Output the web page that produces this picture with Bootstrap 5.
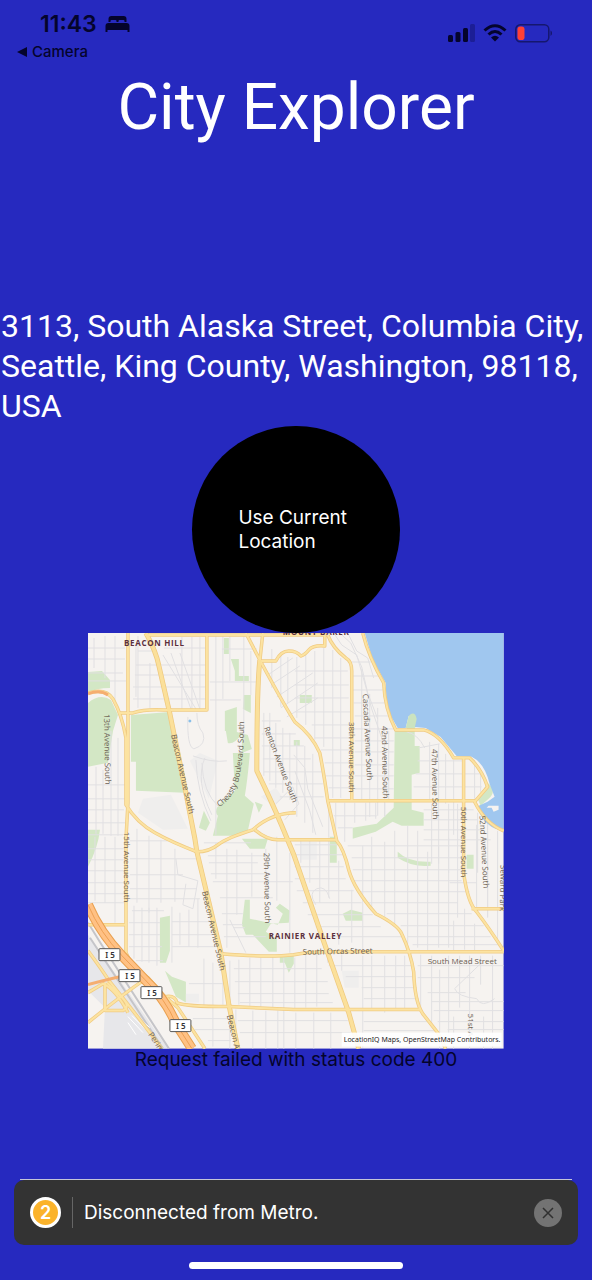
<!DOCTYPE html>
<html lang="en">
<head>
<meta charset="utf-8">
<meta name="viewport" content="width=device-width, initial-scale=1">
<title>City Explorer</title>
<link href="https://cdn.jsdelivr.net/npm/bootstrap@5.3.0/dist/css/bootstrap.min.css" rel="stylesheet">
<style>
body{background:#2629bf;font-family:Inter,"Liberation Sans",sans-serif;color:#fff}
.status{height:72px;color:#04042c}
.clock{font-size:23px;line-height:24px;font-weight:600}
.back{font-size:15px;line-height:16px;font-weight:500;color:#04042c}
.title{font-family:Roboto,"Liberation Sans",sans-serif;font-size:64px;line-height:72px;font-weight:400;margin-bottom:162px}
.address{font-family:Roboto,"Liberation Sans",sans-serif;font-size:32px;line-height:40px;padding-left:1px}
.locate{width:35%;aspect-ratio:1;background:#000;color:#fff;font-size:19px;line-height:24px;padding:0 46px}
.city-map{width:70.2%;aspect-ratio:1}
.failure{font-size:19px;line-height:22px;color:#04042c}
.notice-edge{height:1px;background:#c4c4d8;margin:0 20px}
.notice{background:#333;border-radius:10px;height:65px;margin:0 14px 17px;font-size:19px;line-height:24px}
.count{width:31px;height:31px;border:3px solid #fff;background:#fbb32b;font-size:18px;font-weight:600}
.divider{width:1px;height:31px;background:#666;margin:0 11px}
.dismiss{width:28px;height:28px;background:#737373}
.home-bar{width:36%;height:7px;margin-bottom:11px}
</style>
</head>
<body>
<div class="d-flex flex-column min-vh-100">
<header class="status d-flex justify-content-between">
  <div class="ps-3 pt-2">
    <div class="d-flex align-items-center gap-2 ps-4 pt-1"><span class="clock">11:43</span>
      <svg width="25" height="17" viewBox="0 0 24 17" fill="currentColor" aria-hidden="true"><path d="M3 6V3Q3 0 6 0H18Q21 0 21 3V6H19V5Q19 4 18 4H14Q13 4 13 5V6H11V5Q11 4 10 4H6Q5 4 5 5V6ZM3 7H21Q24 7 24 10V16H22V14H2V16H0V10Q0 7 3 7Z"/></svg>
    </div>
    <a href="#" class="back d-flex align-items-center gap-1 text-decoration-none pt-1 mt-1"><svg width="12" height="10" viewBox="0 0 12 10" fill="currentColor" aria-hidden="true"><path d="M1 5 11 0V10Z"/></svg>Camera</a>
  </div>
  <div class="d-flex align-items-start gap-2 pt-4 pe-4 me-3">
    <svg width="27" height="18" viewBox="0 0 27 18" fill="currentColor" aria-hidden="true"><rect y="11" width="5" height="7" rx="1.5"/><rect x="7.500" y="8" width="5" height="10" rx="1.500"/><rect x="15" y="4" width="5" height="14" rx="1.500"/><rect x="22" width="5" height="18" rx="1.500" opacity=".28"/></svg>
    <svg width="24" height="18" viewBox="0 0 24 18" aria-hidden="true"><g fill="none" stroke="currentColor" stroke-width="3"><path d="M1.500 6.500Q12-3 22.500 6.500M5.500 10.500Q12 4.500 18.500 10.500"/></g><path d="M8 13.500Q12 10 16 13.500L12 17.500Z" fill="currentColor"/></svg>
    <svg width="37" height="19" viewBox="0 0 37 19" aria-hidden="true"><rect x=".8" y=".8" width="33" height="17" rx="4.500" fill="none" stroke="#15176f" stroke-width="1.500"/><rect x="2.500" y="2.500" width="7" height="13.600" rx="2.800" fill="#ff4035"/><path d="M35.500 6.500Q39 9.300 35.500 12Z" fill="#15176f"/></svg>
  </div>
</header>

<main class="d-flex flex-column align-items-center">
  <h1 class="title">City Explorer</h1>
  <p class="address w-100 mb-0">3113, South Alaska Street, Columbia City, Seattle, King County, Washington, 98118, USA</p>
  <button type="button" class="locate border-0 rounded-circle text-start">Use Current Location</button>
  <svg class="city-map d-block" viewBox="0 0 416 416" role="img" aria-label="Street map of Beacon Hill and Rainier Valley">
    <defs>
      <path id="arterials" d="M40 0V170L38 206V328M0 60Q18 55 25 66Q34 82 38 105V172Q49 190 67 200T109 219Q121 219 130 212T165 197Q184 180 208 180M32 80H45Q57 76 76 77H119V2M57 2H237M158 0 172 27Q194 68 207 89Q224 102 232 120Q236 140 240 168L249 208Q256 216 261 237Q266 256 288 281Q310 292 314 301Q323 320 326 339Q327 369 335 381L350 400 358 416M175 0 172 28H188Q193 18 201 18T213 23Q217 22 221 17T237 13V0M240 2Q245 15 258 25Q264 28 264 38V168M275 0Q281 24 296 50Q297 76 308 97H336Q352 101 366 125H382Q394 136 400 154L387 169Q398 191 416 198M240 168H387M376 125V240Q380 270 389 279Q402 296 416 318M384 276H416M167 197Q179 207 190 207H249M133 321Q180 325 206 322Q220 319 240 319H416M38 320Q44 335 60 345L77 364Q87 362 89 370Q96 374 141 374L206 377H333M77 364 90 375 117 416M0 292H38M0 318Q14 337 21 348Q50 384 74 416M0 360 15 351Q28 357 40 380M0 390Q33 363 58 346M17 350V378H35Q43 374 34 365L19 350"/>
      <path id="boulevards" d="M58 0Q68 18 71 33L82 81 95 145 107 206 109 219 133 320 141 372 150 416M172 27Q169 55 169 138Q184 169 194 193L206 222 236 309 261 380 271 416"/>
      <path id="interstate" d="M0 272Q12 300 34 323L57 347Q78 367 88 391L104 416"/>
    </defs>
    <rect width="416" height="416" fill="#f6f3f0"/>
    <g fill="#d3e7c5">
      <path d="M0 39 14 38 22 47V55Q8 55 0 60ZM0 70Q12 60 23 67L30 82 25 98 20 130 0 134ZM43 82 82 79 97 160 48 158V129H43ZM136 5H141V21H136ZM143 26H151V43H161V48H147V38ZM156 62H163V80L155 76ZM137 78 149 74V99L160 102 164 116 154 120V101Q146 112 140 110L138 98H137ZM145 120H162Q160 145 157 163L166 171 160 198 151 203H125L130 183Q125 178 133 170L147 158ZM0 197H12Q10 215 0 234ZM154 206H180L177 216H162ZM72 285 82 283V318L78 330H72ZM77 338 84 344 98 349V370L88 364 83 352ZM157 267H162V286L190 292 195 281 188 275 192 271 202 278 201 290 183 291 178 299 189 306V319H181L165 302H158L154 292ZM307 97H327V113H332V140L324 142V177L336 180V193H314L305 189 288 199 265 206V195L289 191 306 175ZM319 97Q322 81 327 80T327 97ZM212 62H224V70H212ZM206 107H212V113H206ZM242 204H249V230H242ZM310 219Q321 230 343 229V233Q325 235 310 225ZM379 222H386V236H379ZM255 281 263 277 275 280V288H258ZM19 375 28 370 33 377 23 381ZM116 178 122 190 118 198 111 195ZM167 169 175 172 171 180ZM192 323 206 321V331L201 340 197 330H192ZM400 150Q410 158 401 166L393 173 390 166Z"/>
    </g>
    <path d="M0 302 80 416H15L17 375 0 358Z" fill="#e7e7ea"/>
    <g fill="#efeeed"><path d="M98 361H111V370H98ZM55 166 83 162 100 196 75 197 50 180ZM213 209H229V227H213ZM254 338H271V355H257ZM112 120 130 128 121 166 102 128ZM173 164 188 155 195 165 186 174Z"/></g>
    <g fill="none" stroke="#e1e0e2" stroke-width="1">
      <path d="M6 5V35M17 3V45M27 3V70M50 3V75M62 30V75M76 15H119M50 18H66M48 32H118M47 42H118M45 54H118M45 66H118M94 4V76M104 4V76M112 4V76M128 3V202M135 3V66M134 16H169M142 3V48M122 49H168M122 67H153M156 2V110M163 18V62M0 15H37M0 26H37M0 40H35M0 48H38M48 12V64M75 22 108 76M83 20 103 76M92 20 112 76M71 41 83 76"/>
      <path d="M8 134V201M15 137V201M23 98V203M30 105V203M0 152H38M0 166H38M0 177H36M0 190H38M0 202H35M0 216H38M0 227H38M0 238H38M0 250H38M0 261H37M0 270H37M7 204V268M17 204V270M27 204V290M49 196V270M61 203V280M73 207V270M87 216V269M42 208H80M42 226H109M42 242H95M42 256H109M42 266H112M44 278H76M46 273V326M54 275V329M61 275V330M69 275V333M84 274V330M92 280V312M101 277V314M110 266V315M41 290H72M41 302H72M41 314H74M48 328H75M84 289H125M84 302H128M84 314H129"/>
      <path d="M116 210H163M120 223H181M121 230H170M123 241H182M125 249H205M132 265H185M134 281H155M135 292H155M136 304H178M128 210V246M139 216V315M149 217V282M164 220V264M178 216V256M189 204V268M202 220V320M100 84Q99 114 106 116Q119 112 115 100Q109 93 109 80M105 123Q124 130 139 128M117 125Q107 148 124 182M108 127Q109 159 123 188M131 174Q115 160 114 130M88 226 90 242 110 248 105 276 95 272 98 251M142 287 158 320M146 295H157"/>
      <path d="M184 16V55M193 20V74M200 24V70M209 24V85M218 21V92M227 18V107M236 15V114M245 17V165M253 25V165M183 52 212 33M180 42 205 25M189 64 225 40M193 75 230 50M199 84 230 65M207 38H260M207 52H261M207 65H261M207 79H263M224 92H263M227 105H263M233 117H263M237 130H263M238 143H263M241 155H263M176 80V143M182 80V148M188 90V155M195 95V160M202 100V167M209 109V184M217 113V190M225 121V200M174 88H193M174 101H208M174 113H216M175 126H223M176 139H234M181 151H235M192 164H236M188 171 205 154 211 171 197 187M206 122 217 135 220 156 235 194M207 138 222 178 228 202"/>
      <path d="M246 0 254 12 269 22 277 50 284 76 295 108M252 0 263 10 274 34 280 60 290 86M260 0 269 18 280 25 286 45M264 29H283M265 43H291M265 57H295M266 70H297M267 83H301M267 96H308M267 108H306M267 119H306M267 132H306M267 143H306M267 156H306M274 36V168M282 61V184M290 75V183M297 94V184M301 98V168M241 175V205M248 170V205M257 170V209M267 170V190M278 170V188M288 170V186M297 170V184M246 183H289M250 195H265M319 99Q330 101 337 115M331 115 352 111M342 109V168M351 111V231M358 121V171M366 127V202M387 127V166M393 140V159M330 128H375M328 141H395M326 154H394M336 177H386M336 187H390M336 197H396M336 207H403M344 171V231M361 171V240M370 171V285M390 180V240M400 190V285M410 198V280"/>
      <path d="M207 212H250M207 222H257M207 234H256M207 246H258M209 258H266M215 270H274M220 282H285M228 294H293M235 304H315M213 207V230M222 207V250M232 207V270M241 207V265M251 228V312M264 257V310M275 213V317M284 204V275M297 209V287M307 198V292M320 193V311M330 198V315M340 219V318M351 214V315M361 205V315M389 192V275M400 198V284M410 200V310M260 213H378M264 225H375M265 237H375M266 248H374M270 259H382M280 270H370M299 281H384M313 293H396M320 304H403M325 312H412M362 250H389M366 288V318M377 276V317M387 291V318M228 272Q220 260 229 256T242 266"/>
      <path d="M116 326V374M125 330V414M135 332V372M142 328V416M151 327V372M162 325V375M173 325V375M185 324V375M196 325V416M207 325V376M218 322V375M229 322V374M240 322V330M254 322V338M275 323V415M284 323V376M297 323V380M308 323V377M317 323V376M333 322V378M344 323V393M352 337V416M361 323V405M372 323V375M382 323V416M393 323V352M405 323V416M101 351H137M146 336H234M147 349H240M150 361H241M152 370H245M241 333H325M258 344H325M274 355H329M276 366H331M276 389H340M276 398H347M265 405H408M105 386H139M107 397H142M120 408H143M150 388H260M152 400H263M330 333H416M330 345H387M340 360H378M344 369H416M346 378H416M350 389H416M360 397H416M394 330 367 356Q370 364 389 366 394 376 407 366M148 377V416M165 378V416M178 378V416M190 378V416M208 380V416M226 380V416M243 380V416M366 384V416M396 384V416"/>
    </g>
    <path d="M277 0H416V196Q406 199 395 186L389 174 400 169 407 164 402 151Q397 130 384 124L369 123 353 104 338 95 327 94V83L321 83 318 95H310L299 76 298 50 285 27Z" fill="#a0c7ef"/>
    <path d="M401 173H411V177L406 179 404 175H399Z" fill="#f6f3f0"/><circle cx="102" cy="88" r="1.500" fill="#89bfe8"/>
    <path d="M321 83Q327 77 329 86L327 95H318Z" fill="#cbe3bf"/>
    <g fill="none" stroke="#c5c5c9" stroke-width="2"><path d="M0 290 13 311 81 416M2 305 75 416"/></g>
    <path d="M40 384 55 400M44 383 59 398M40 390 48 402M46 382 62 395" stroke="#fff" stroke-width="1"/>
    <use href="#arterials" fill="none" stroke="#f0cb83" stroke-width="3.500" stroke-linejoin="round"/>
    <use href="#boulevards" fill="none" stroke="#efc97f" stroke-width="5" stroke-linejoin="round"/>
    <use href="#arterials" fill="none" stroke="#fce3a1" stroke-width="2" stroke-linejoin="round"/>
    <use href="#boulevards" fill="none" stroke="#fbe09a" stroke-width="3.500" stroke-linejoin="round"/>
    <use href="#interstate" fill="none" stroke="#e9a04f" stroke-width="10"/>
    <use href="#interstate" fill="none" stroke="#ffc184" stroke-width="8"/>
    <use href="#interstate" fill="none" stroke="#eda054" stroke-width="1"/>
    <path d="M0 352Q25 345 42 342M0 61Q12 56 20 62" fill="none" stroke="#f5ae70" stroke-width="3"/>
    <g font-family="Open Sans, Noto Sans, sans-serif" font-size="8" fill="#6b5e52">
      <text transform="translate(16 81) rotate(89)">13th Avenue South</text>
      <text transform="translate(36 199) rotate(90)">15th Avenue South</text>
      <text transform="translate(83 102) rotate(77)">Beacon Avenue South</text>
      <text transform="translate(114 259) rotate(77)">Beacon Avenue South</text>
      <text transform="translate(139 383) rotate(77)">Beacon A</text>
      <text transform="translate(176 95) rotate(69)">Renton Avenue South</text>
      <text transform="translate(176 220) rotate(89)">29th Avenue South</text>
      <text transform="translate(261 89) rotate(90)">38th Avenue South</text>
      <text transform="translate(275 61) rotate(87)">Cascadia Avenue South</text>
      <text transform="translate(294 93) rotate(89)">42nd Avenue South</text>
      <text transform="translate(344 116) rotate(89)">47th Avenue South</text>
      <text transform="translate(373 174) rotate(90)">50th Avenue South</text>
      <text transform="translate(392 183) rotate(87)">52nd Avenue South</text>
      <text transform="translate(380 381) rotate(90)">51st A</text>
      <text transform="translate(413 232) rotate(91)">Seward Park</text>
      <text transform="translate(60 402) rotate(56)">Perim</text>
      <text transform="translate(215 322) rotate(-1)">South Orcas Street</text>
      <text x="340" y="331">South Mead Street</text>
      <path id="cheasty" d="M131 174Q143 168 150 150Q157 127 156 80" fill="none"/>
      <text><textPath href="#cheasty">Cheasty Boulevard South</textPath></text>
    </g>
    <g font-family="Open Sans, Noto Sans, sans-serif" font-size="8" font-weight="700" letter-spacing=".7" fill="#5c303d">
      <text x="36" y="13">BEACON HILL</text><text x="181" y="306">RAINIER VALLEY</text><text x="195" y="2">MOUNT BAKER</text>
    </g>
    <g fill="#fff" stroke="#555" stroke-width="1"><rect x="11" y="316" width="21" height="12" rx="1"/><rect x="31" y="337" width="21" height="12" rx="1"/><rect x="53" y="354" width="21" height="12" rx="1"/><rect x="82" y="387" width="21" height="12" rx="1"/></g>
    <g font-family="Noto Sans, sans-serif" font-size="8" font-weight="600" text-anchor="middle" fill="#333"><text x="22" y="325">I 5</text><text x="42" y="346">I 5</text><text x="64" y="363">I 5</text><text x="93" y="396">I 5</text></g>
    <rect x="254" y="400" width="160" height="14" fill="#fff" opacity=".9"/>
    <text x="256" y="409" font-family="Noto Sans, sans-serif" font-size="7" fill="#222">LocationIQ Maps, OpenStreetMap Contributors.</text>
  </svg>
  <p class="failure mb-0">Request failed with status code 400</p>
</main>

<footer class="mt-auto">
  <div class="notice-edge"></div>
  <div class="notice d-flex align-items-center px-3" role="status">
    <span class="count rounded-circle d-flex align-items-center justify-content-center">2</span>
    <span class="divider"></span>
    <span class="flex-grow-1">Disconnected from Metro.</span>
    <button type="button" class="dismiss border-0 rounded-circle p-0 d-flex align-items-center justify-content-center" aria-label="Dismiss"><svg width="12" height="12" viewBox="0 0 12 12" stroke="#303030" stroke-width="1.500" aria-hidden="true"><path d="M1 1 11 11M11 1 1 11"/></svg></button>
  </div>
  <div class="home-bar bg-white rounded-pill mx-auto"></div>
</footer>
</div>
<script src="https://cdn.jsdelivr.net/npm/bootstrap@5.3.0/dist/js/bootstrap.bundle.min.js"></script>
</body>
</html>
